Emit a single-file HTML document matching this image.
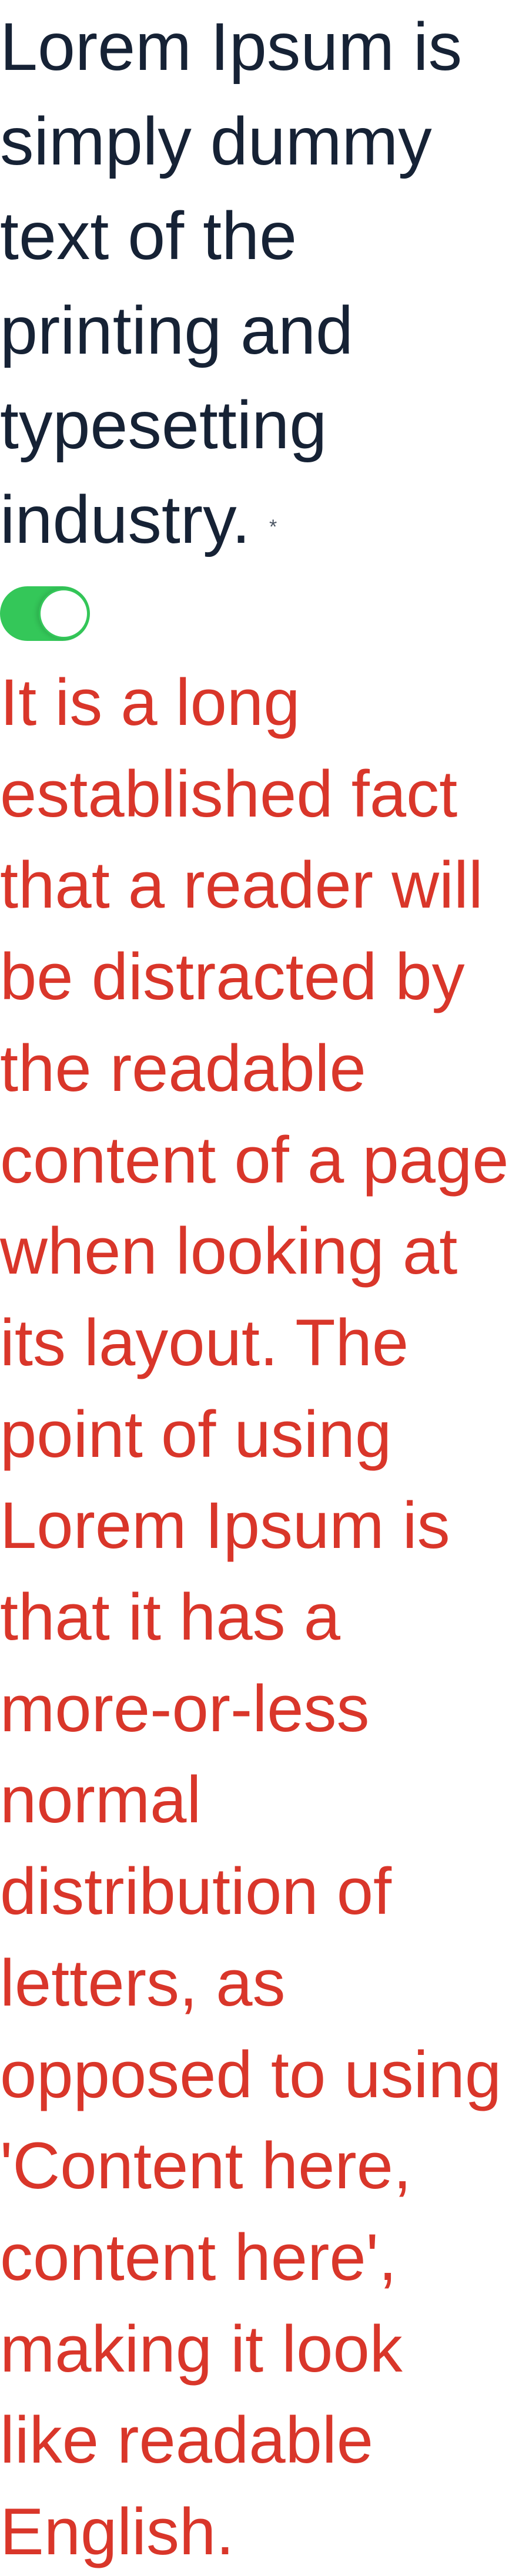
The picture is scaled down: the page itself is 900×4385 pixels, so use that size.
<!DOCTYPE html>
<html><head><meta charset="utf-8"><style>
html,body{margin:0;padding:0;background:#fff;width:900px;height:4385px;overflow:hidden;position:relative}
.dark{position:absolute;left:0;top:0px;font-family:"Liberation Sans",sans-serif;font-size:115px;line-height:161px;color:#162235;white-space:nowrap}
.red{position:absolute;left:0;top:1118px;font-family:"Liberation Sans",sans-serif;font-size:112px;line-height:155.7px;color:#d9362a;white-space:nowrap}
.ast{position:absolute;left:458px;top:878px;font-family:"Liberation Sans",sans-serif;font-size:34px;color:#4b5563}
.tog{position:absolute;left:0;top:998px;width:153px;height:93px;border-radius:47px;background:#34c759}
.knob{position:absolute;left:66px;top:4px;width:79px;height:79px;border-radius:50%;background:#fff;border:3px solid #34c759;box-shadow:-4px 0 8px rgba(0,0,0,.12)}
</style></head><body>
<div class="dark">Lorem Ipsum is<br>simply dummy<br>text of the<br>printing and<br>typesetting<br>industry.</div>
<div class="ast">*</div>
<div class="tog"><div class="knob"></div></div>
<div class="red">It is a long<br>established fact<br>that a reader will<br>be distracted by<br>the readable<br>content of a page<br>when looking at<br>its layout. The<br>point of using<br>Lorem Ipsum is<br>that it has a<br>more-or-less<br>normal<br>distribution of<br>letters, as<br>opposed to using<br>'Content here,<br>content here',<br>making it look<br>like readable<br>English.</div>
</body></html>
